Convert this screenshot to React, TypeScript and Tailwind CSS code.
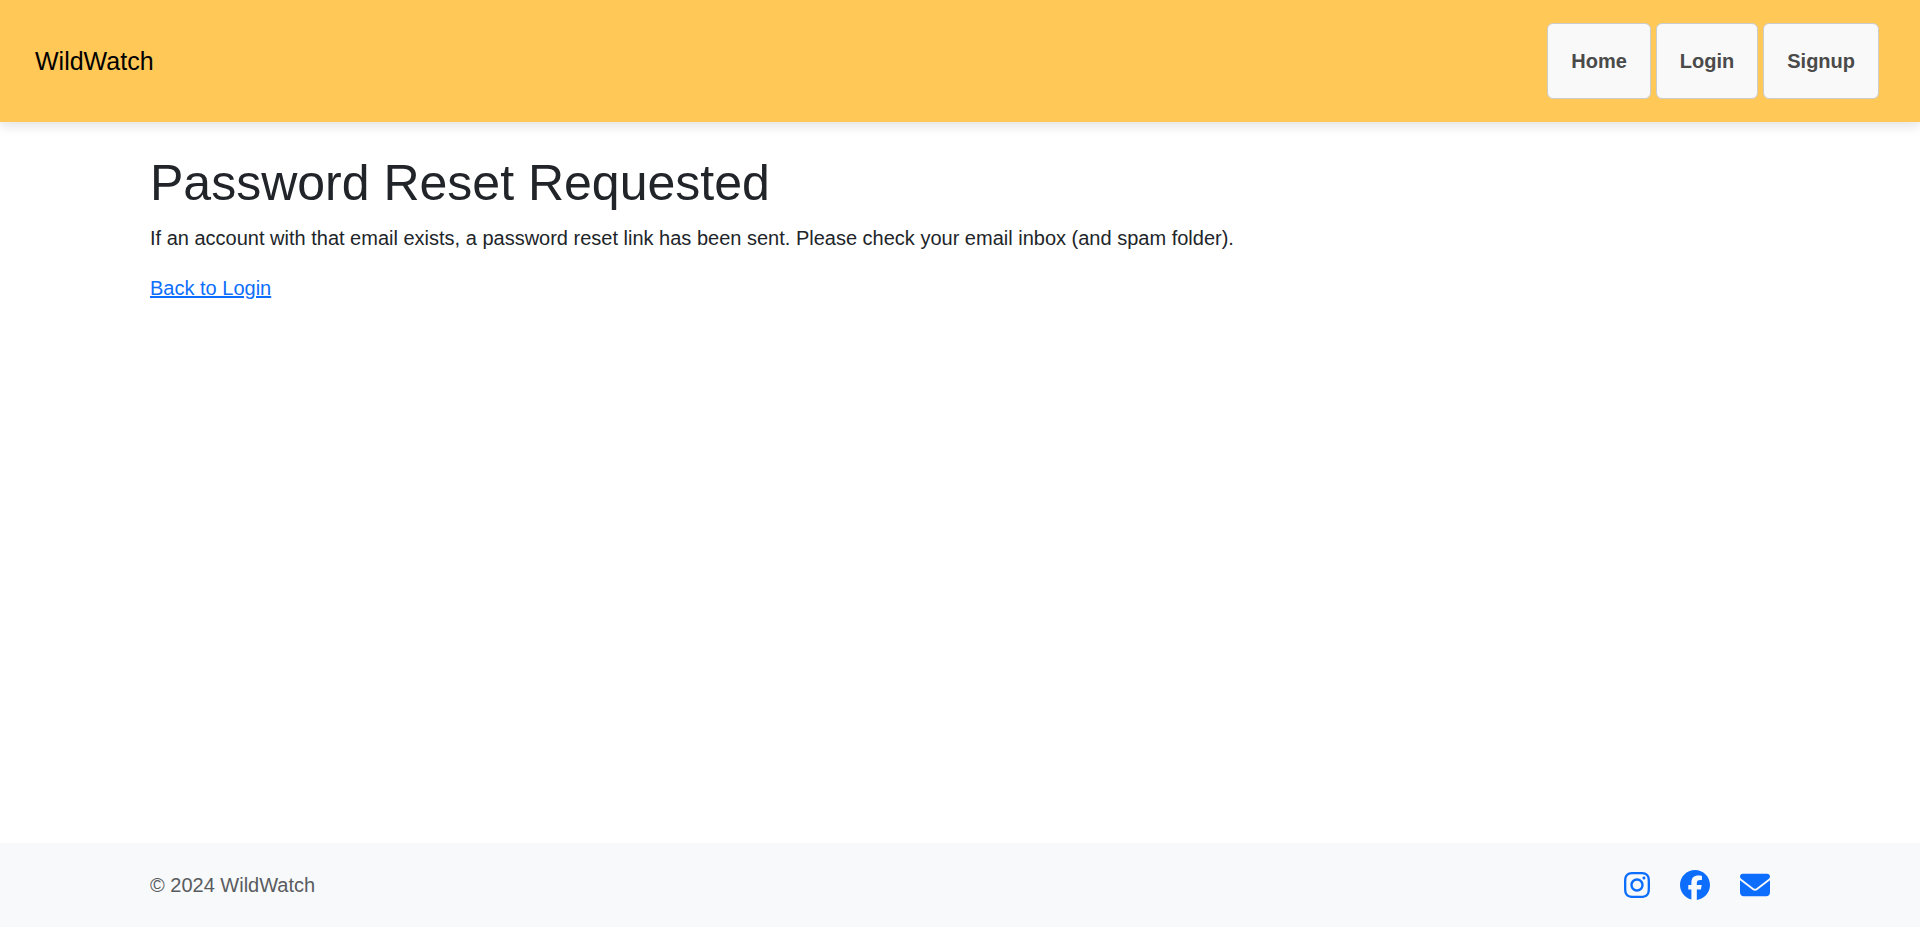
import { FaFacebook, FaInstagram, FaEnvelope } from "react-icons/fa6";

const navLinks = ["Home", "Login", "Signup"];

const socials = [
  { label: "Instagram", Icon: FaInstagram, size: "h-[30px] w-[26px]" },
  { label: "Facebook", Icon: FaFacebook, size: "h-[30px] w-[30px]" },
  { label: "Email", Icon: FaEnvelope, size: "h-[30px] w-[30px]" },
];

export default function App() {
  return (
    <div className="flex min-h-screen flex-col bg-white font-['Liberation_Sans',Arial,sans-serif] text-xl leading-[30px] text-[#212529]">
      <header className="bg-[#ffc857] shadow-[0_5px_10px_rgba(0,0,0,0.1)]">
        <nav className="flex items-center justify-between py-[23px] pr-[41px] pl-[35px]">
          <a href="#" className="text-[25px] leading-[38px] text-black">WildWatch</a>
          <ul className="flex gap-[5px]">
            {navLinks.map((name) => (
              <li key={name}>
                <a href="#" className="block rounded-md border border-[#ccc] bg-[#f9f9f9] px-[23px] py-[22px] font-bold text-[#4a4a4a]">
                  {name}
                </a>
              </li>
            ))}
          </ul>
        </nav>
      </header>
      <main className="mx-auto w-full max-w-[1650px] flex-1 px-[15px] pt-[31px]">
        <h1 className="mb-2.5 text-[50px] leading-[60px]">Password Reset Requested</h1>
        <p className="mb-5">
          If an account with that email exists, a password reset link has been sent. Please check your email inbox (and spam folder).
        </p>
        <a href="#" className="text-[#0d6efd] underline decoration-2">Back to Login</a>
      </main>
      <footer className="bg-[#f8f9fa] py-[27px]">
        <div className="mx-auto flex w-full max-w-[1650px] items-center justify-between px-[15px]">
          <span className="text-[#595c5f]">© 2024 WildWatch</span>
          <div className="flex gap-[30px]">
            {socials.map(({ label, Icon, size }) => (
              <a key={label} href="#" aria-label={label} className="text-[#0d6efd]">
                <Icon className={size} />
              </a>
            ))}
          </div>
        </div>
      </footer>
    </div>
  );
}
